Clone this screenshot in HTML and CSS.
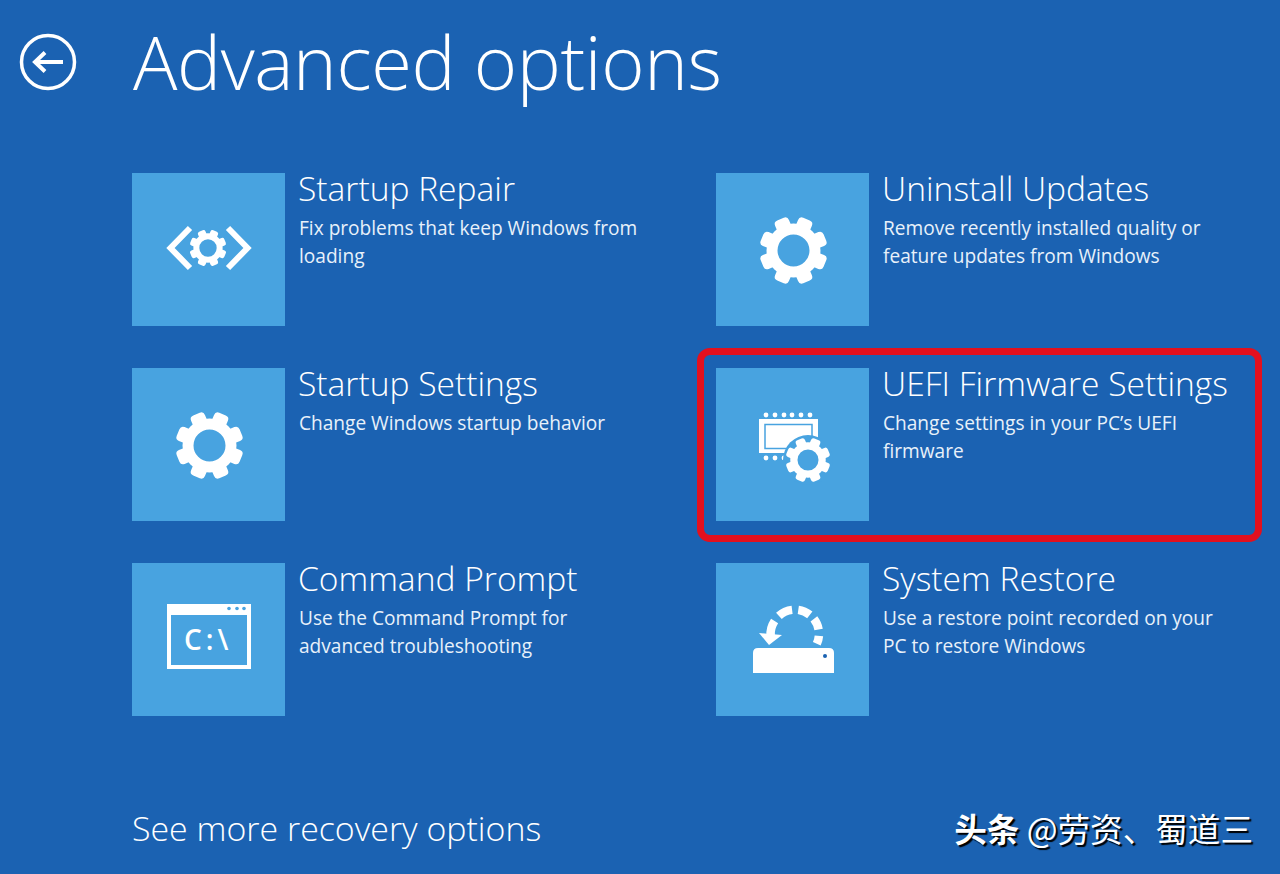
FILE: index.html
```html
<!DOCTYPE html>
<html lang="en">
<head>
	<title>Advanced options</title>
	<meta name="viewport" content="width=device-width">
	<link rel="stylesheet" href="styles.css">
</head>
<body>
	<svg class="defs" width="0" height="0">
		<symbol id="gear" viewBox="-35 -35 70 70">
			<circle r="21.5" fill="none" stroke="#fff" stroke-width="11"/>
			<g fill="#fff">
				<rect x="-7.5" y="-34" width="15" height="13" rx="4" transform="rotate(22.5)"/>
				<rect x="-7.5" y="-34" width="15" height="13" rx="4" transform="rotate(67.5)"/>
				<rect x="-7.5" y="-34" width="15" height="13" rx="4" transform="rotate(112.5)"/>
				<rect x="-7.5" y="-34" width="15" height="13" rx="4" transform="rotate(157.5)"/>
				<rect x="-7.5" y="-34" width="15" height="13" rx="4" transform="rotate(202.5)"/>
				<rect x="-7.5" y="-34" width="15" height="13" rx="4" transform="rotate(247.5)"/>
				<rect x="-7.5" y="-34" width="15" height="13" rx="4" transform="rotate(292.5)"/>
				<rect x="-7.5" y="-34" width="15" height="13" rx="4" transform="rotate(337.5)"/>
			</g>
		</symbol>
	</svg>

	<header class="top">
		<svg class="back" viewBox="0 0 58 58">
			<circle cx="29" cy="29" r="26.5" fill="none" stroke="#fff" stroke-width="3.5"/>
			<path d="M44 29H16M26 19.5L16 29L26 38.5" fill="none" stroke="#fff" stroke-width="4"/>
		</svg>
		<h1>Advanced options</h1>
	</header>

	<main class="options">
		<div class="option">
			<div class="tile">
				<svg viewBox="0 0 153 153">
					<path d="M58 55L38.5 75L58 95M96 55L115.5 75L96 95" fill="none" stroke="#fff" stroke-width="6"/>
					<use href="#gear" x="57" y="56" width="38" height="38"/>
				</svg>
			</div>
			<div class="text">
				<h2>Startup Repair</h2>
				<p>Fix problems that keep Windows from<br>loading</p>
			</div>
		</div>

		<div class="option">
			<div class="tile">
				<svg viewBox="0 0 153 153">
					<use href="#gear" x="42.5" y="42.5" width="70" height="70"/>
				</svg>
			</div>
			<div class="text">
				<h2>Uninstall Updates</h2>
				<p>Remove recently installed quality or<br>feature updates from Windows</p>
			</div>
		</div>

		<div class="option">
			<div class="tile">
				<svg viewBox="0 0 153 153">
					<use href="#gear" x="42.5" y="42.5" width="70" height="70"/>
				</svg>
			</div>
			<div class="text">
				<h2>Startup Settings</h2>
				<p>Change Windows startup behavior</p>
			</div>
		</div>

		<div class="option picked">
			<div class="tile">
				<svg viewBox="0 0 153 153">
					<g fill="#fff">
						<circle cx="50" cy="47" r="2.4"/><circle cx="59" cy="47" r="2.4"/><circle cx="68" cy="47" r="2.4"/>
						<circle cx="76" cy="47" r="2.4"/><circle cx="85" cy="47" r="2.4"/><circle cx="94" cy="47" r="2.4"/>
						<circle cx="50" cy="90" r="2.4"/><circle cx="59" cy="90" r="2.4"/><circle cx="68" cy="90" r="2.4"/>
						<rect x="43" y="51" width="59" height="34"/>
					</g>
					<rect x="49" y="56.5" width="47" height="24" fill="none" stroke="#48a3e0" stroke-width="1.5"/>
					<circle cx="92" cy="92" r="25" fill="#48a3e0"/>
					<use href="#gear" x="69" y="69" width="46" height="46"/>
				</svg>
			</div>
			<div class="text">
				<h2>UEFI Firmware Settings</h2>
				<p>Change settings in your PC’s UEFI<br>firmware</p>
			</div>
		</div>

		<div class="option">
			<div class="tile">
				<svg viewBox="0 0 153 153">
					<rect x="37" y="43" width="80" height="61" fill="none" stroke="#fff" stroke-width="4"/>
					<rect x="35" y="41" width="84" height="11" fill="#fff"/>
					<g fill="#48a3e0">
						<circle cx="97" cy="45.5" r="1.8"/><circle cx="105" cy="45.5" r="1.8"/><circle cx="112" cy="45.5" r="1.8"/>
					</g>
					<text class="prompt" x="52" y="87">C:\</text>
				</svg>
			</div>
			<div class="text">
				<h2>Command Prompt</h2>
				<p>Use the Command Prompt for<br>advanced troubleshooting</p>
			</div>
		</div>

		<div class="option">
			<div class="tile">
				<svg viewBox="0 0 153 153">
					<path d="M100.8 80.8A24 24 0 0 0 102.9 72.8M102.6 66.5A24 24 0 0 0 97.9 55.9M93.8 51.8A24 24 0 0 0 82.3 46.9M76.1 46.9A24 24 0 0 0 62.9 52.9M58.6 58A24 24 0 0 0 54.6 73" fill="none" stroke="#fff" stroke-width="8.5"/>
					<path d="M43 70L66 72L53 82Z" fill="#fff"/>
					<path d="M37 110V90Q37 85 42 85H113Q118 85 118 90V110Z" fill="#fff"/>
					<circle cx="109" cy="93" r="2" fill="#1b62b2"/>
				</svg>
			</div>
			<div class="text">
				<h2>System Restore</h2>
				<p>Use a restore point recorded on your<br>PC to restore Windows</p>
			</div>
		</div>
	</main>

	<footer class="bottom">
		<a class="more">See more recovery options</a>
		<div class="mark"><b>头条</b> @劳资、蜀道三</div>
	</footer>
</body>
</html>
```
FILE: styles.css
```css
html, body {
	margin: 0;
	height: 100%;
}
body {
	background: #1b62b2;
	color: #fff;
	font-family: "Open Sans", "Liberation Sans", sans-serif;
	overflow: hidden;
}
.defs {
	display: block;
	height: 0;
}

.top {
	display: flex;
	align-items: center;
	height: 124px;
	padding-left: 19px;
}
.back {
	width: 58px;
	height: 58px;
	margin-right: 56px;
}
h1 {
	margin: 0;
	font-size: 74px;
	font-weight: 300;
	letter-spacing: -0.4px;
	line-height: 124px;
	white-space: nowrap;
}

.options {
	display: grid;
	grid-template-columns: 584px 1fr;
	row-gap: 42px;
	padding: 49px 0 0 132px;
}
.option {
	display: flex;
	gap: 14px;
	position: relative;
}
.tile {
	width: 153px;
	height: 153px;
	background: #48a3e0;
	flex: none;
}
.tile svg {
	display: block;
	width: 153px;
	height: 153px;
}
.prompt {
	font-family: "Open Sans", sans-serif;
	font-size: 28px;
	font-weight: 600;
	letter-spacing: 4px;
	fill: #fff;
}
.text {
	white-space: nowrap;
}
h2 {
	margin: -1px 0 0 -1px;
	font-size: 33.6px;
	font-weight: 300;
	line-height: 32px;
}
p {
	margin: 10px 0 0;
	font-size: 19.1px;
	line-height: 28px;
	color: #e8f1fa;
}
.picked::after {
	content: "";
	position: absolute;
	top: -20px;
	left: -19px;
	right: 18px;
	bottom: -21px;
	border: 7px solid #e3101e;
	border-radius: 13px;
}

.bottom {
	display: flex;
	justify-content: space-between;
	align-items: center;
	padding: 92px 27px 0 132px;
}
.more {
	font-size: 33.9px;
	font-weight: 300;
	line-height: 40px;
}
.mark {
	font-family: "Noto Sans CJK SC", sans-serif;
	font-size: 32.6px;
	line-height: 40px;
	text-shadow: 2px 2px 1px #000;
}
.mark b {
	font-weight: 700;
}
```
